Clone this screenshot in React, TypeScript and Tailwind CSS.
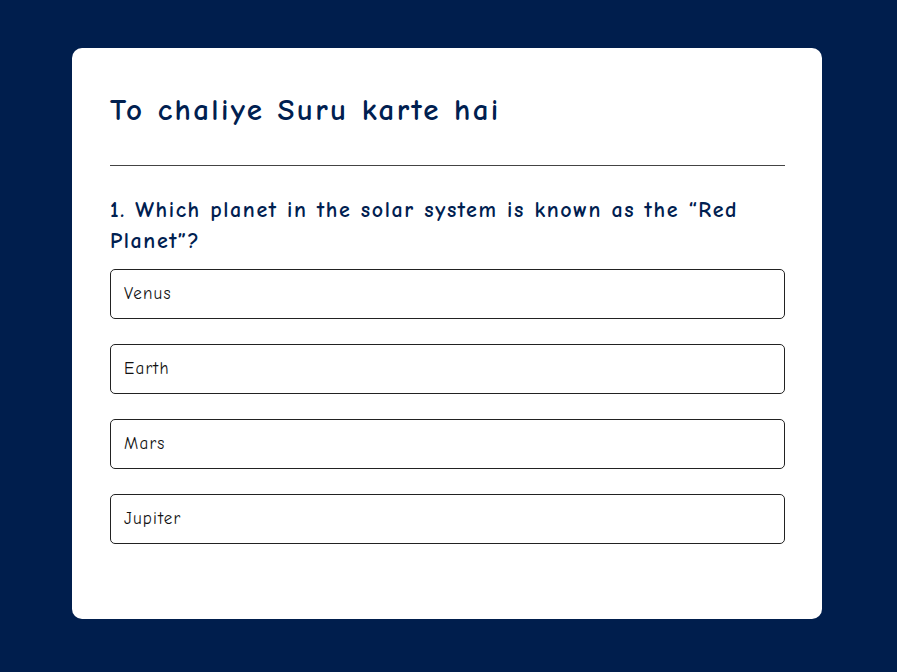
const options = ['Venus', 'Earth', 'Mars', 'Jupiter'];

export default function App() {
    return (
        <div className="min-h-screen bg-[#001e4d] pt-12 font-['Comic_Sans_MS','Comic_Neue','Noto_Sans',sans-serif]">
            <div className="ml-[72px] w-[750px] rounded-[10px] bg-white pl-[38px] pr-[37px] pt-[44px] pb-[75px]">
                <h1 className="text-[31px] leading-[36px] font-bold tracking-[2.3px] text-[#002050]">To chaliye Suru karte hai</h1>

                <hr className="mt-[37px] border-t border-[#444]" />

                <h2 className="mt-[29px] text-[22px] leading-[31px] font-bold tracking-[1.6px] text-[#002050]">
                    1. Which planet in the solar system is known as the “Red<br />Planet”?
                </h2>

                <div className="mt-[12px] flex flex-col gap-[25px]">
                    {options.map((opt) => (
                        <button
                            key={opt}
                            className="flex h-[50px] items-center rounded-[5px] border border-[#222] px-[13px] text-left text-[17px] tracking-[1.2px] text-[#111]"
                        >
                            {opt}
                        </button>
                    ))}
                </div>
            </div>
        </div>
    );
}
